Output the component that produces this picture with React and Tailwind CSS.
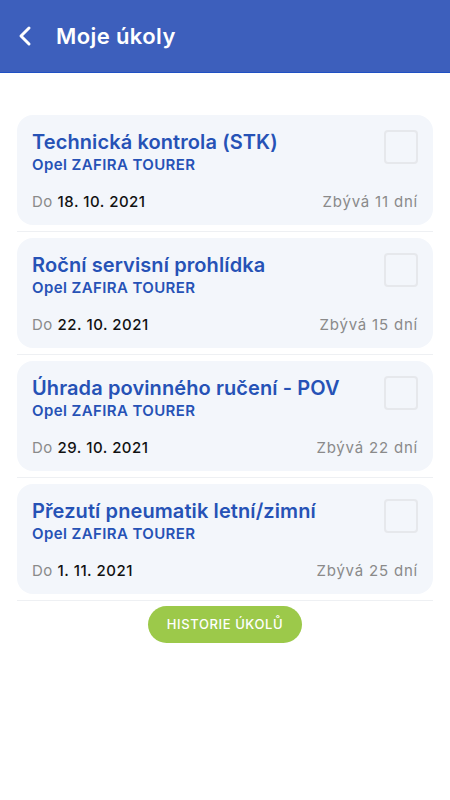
import React from 'react';

const tasks = [
  { title: 'Technická kontrola (STK)', car: 'Opel ZAFIRA TOURER', date: '18. 10. 2021', left: 'Zbývá 11 dní' },
  { title: 'Roční servisní prohlídka', car: 'Opel ZAFIRA TOURER', date: '22. 10. 2021', left: 'Zbývá 15 dní' },
  { title: 'Úhrada povinného ručení - POV', car: 'Opel ZAFIRA TOURER', date: '29. 10. 2021', left: 'Zbývá 22 dní' },
  { title: 'Přezutí pneumatik letní/zimní', car: 'Opel ZAFIRA TOURER', date: '1. 11. 2021', left: 'Zbývá 25 dní' },
];

function TaskCard({ task }) {
  return (
    <div className="border-b border-[#eef0f3] pt-[6px] pb-[6px] first:pt-0">
      <div className="rounded-[16px] bg-[#f3f6fb] px-[15px] pt-[14px] pb-[14px] h-[110px] flex flex-col">
        <div className="flex items-start justify-between">
          <div>
            <div className="text-[20px] leading-[26px] font-semibold text-[#2652b6] tracking-[0.1px]">{task.title}</div>
            <div className="text-[15px] leading-[19px] font-semibold text-[#2652b6] tracking-[0.4px]">{task.car}</div>
          </div>
          <div className="mt-[1px] w-[34px] h-[34px] shrink-0 rounded-[4px] border-2 border-[#e6e8ec] bg-[#f3f6fb]" />
        </div>
        <div className="mt-auto flex items-center justify-between text-[15px] leading-[18px] tracking-[0.5px]">
          <div>
            <span className="text-[#8a8a8a]">Do </span>
            <span className="font-medium text-[#111]">{task.date}</span>
          </div>
          <span className="text-[#8a8a8a] tracking-[0.8px]">{task.left}</span>
        </div>
      </div>
    </div>
  );
}

export default function App() {
  return (
    <div className="min-h-screen bg-white" style={{ fontFamily: 'Inter, "Noto Sans", sans-serif' }}>
      <div className="h-[73px] bg-[#3d5fbc] border-b border-[#1f50c4] flex items-center px-[16px] gap-[22px]">
        <svg width="18" height="22" viewBox="0 0 18 22" fill="none" stroke="white" strokeWidth="3" strokeLinecap="round" strokeLinejoin="round">
          <path d="M13 3 L5 11 L13 19" />
        </svg>
        <h1 className="text-[22px] font-semibold text-white tracking-[0.4px]">Moje úkoly</h1>
      </div>

      <div className="px-[17px] pt-[42px]">
        {tasks.map((t) => (
          <TaskCard key={t.title} task={t} />
        ))}
        <div className="flex justify-center pt-[5px]">
          <button className="h-[37px] w-[154px] rounded-full bg-[#9cc94a] text-white text-[13px] font-medium tracking-[0.6px]">
            HISTORIE ÚKOLŮ
          </button>
        </div>
      </div>
    </div>
  );
}
